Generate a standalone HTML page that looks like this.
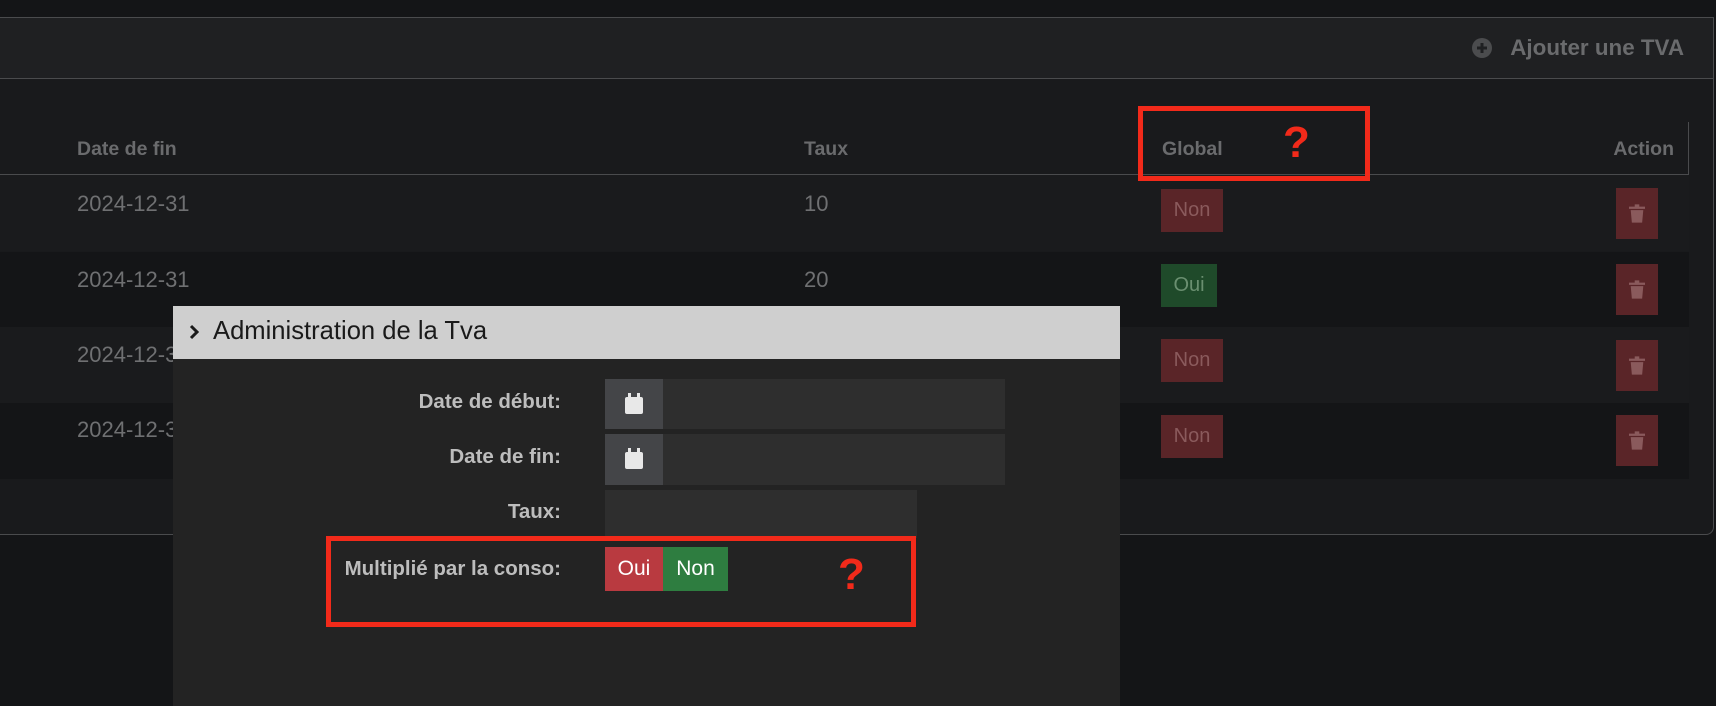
<!DOCTYPE html>
<html><head><meta charset="utf-8"><style>
*{margin:0;padding:0;box-sizing:border-box}
body{width:1716px;height:704px;background:#141517;font-family:"Liberation Sans",sans-serif;position:relative;overflow:hidden}
.a{position:absolute}
.panel{left:-2px;top:17px;width:1716px;height:518px;border:1px solid #4a4b4d;border-radius:0 0 8px 0;background:#191a1c}
.ph{left:0;top:18px;width:1713px;height:61px;background:#1f2022;border-bottom:1px solid #4a4b4d}
.t{color:#6f7072;font-size:22px;line-height:26px}
.th{color:#6a6b6d;font-size:19.5px;font-weight:bold;line-height:22px}
.row{left:0;width:1689px;height:76px}
.badge{width:62px;height:43px;color:#8a5a5c;font-size:20px;display:flex;align-items:center;justify-content:center}
.non{background:#5a2528}
.oui{background:#1f4a2a;color:#6a8f70}
.trash{width:42px;height:51px;background:#5a2528;display:flex;align-items:center;justify-content:center}
.lbl{color:#bdbdbd;font-size:20.5px;font-weight:bold;text-align:right;width:460px;left:101px;line-height:24px}
.red{border:5px solid #f22a1a}
.q{color:#f22a1a;font-weight:bold;font-size:44px}
</style></head><body>
<div class="a panel"></div>
<div class="a ph"></div>
<svg class="a" style="left:1471px;top:37px" width="22" height="22" viewBox="0 0 22 22"><circle cx="11" cy="11" r="10" fill="#4b4c4e"/><path d="M11 6v10M6 11h10" stroke="#1f2022" stroke-width="3"/></svg>
<div class="a" style="right:32px;top:35px;color:#6a6b6d;font-size:22.4px;font-weight:bold">Ajouter une TVA</div>
<div class="a" style="left:0;top:174px;width:1689px;height:1px;background:#4a4b4d"></div>
<div class="a" style="left:1688px;top:122px;width:1px;height:53px;background:#4a4b4d"></div>
<div class="a th" style="left:77px;top:138px">Date de fin</div>
<div class="a th" style="left:804px;top:138px">Taux</div>
<div class="a th" style="left:1162px;top:138px">Global</div>
<div class="a th" style="right:42px;top:138px">Action</div>
<div class="a row" style="top:175px;background:#1a1b1d"></div>
<div class="a row" style="top:252px;background:#141517"></div>
<div class="a row" style="top:327px;background:#1a1b1d"></div>
<div class="a row" style="top:403px;background:#141517"></div>
<div class="a t" style="left:77px;top:191px">2024-12-31</div><div class="a t" style="left:804px;top:191px">10</div>
<div class="a t" style="left:77px;top:267px">2024-12-31</div><div class="a t" style="left:804px;top:267px">20</div>
<div class="a t" style="left:77px;top:342px">2024-12-31</div>
<div class="a t" style="left:77px;top:417px">2024-12-31</div>
<div class="a badge non" style="left:1161px;top:189px">Non</div>
<div class="a badge oui" style="left:1161px;top:264px;width:56px">Oui</div>
<div class="a badge non" style="left:1161px;top:339px">Non</div>
<div class="a badge non" style="left:1161px;top:415px">Non</div>
<div class="a trash" style="left:1616px;top:188px"><svg width="16" height="19" viewBox="0 0 14 16"><path d="M0 2h14v2H0zM5 0h4v2H5zM1.5 5h11l-1 11h-9z" fill="#8a5a5c"/></svg></div>
<div class="a trash" style="left:1616px;top:264px"><svg width="16" height="19" viewBox="0 0 14 16"><path d="M0 2h14v2H0zM5 0h4v2H5zM1.5 5h11l-1 11h-9z" fill="#8a5a5c"/></svg></div>
<div class="a trash" style="left:1616px;top:340px"><svg width="16" height="19" viewBox="0 0 14 16"><path d="M0 2h14v2H0zM5 0h4v2H5zM1.5 5h11l-1 11h-9z" fill="#8a5a5c"/></svg></div>
<div class="a trash" style="left:1616px;top:415px"><svg width="16" height="19" viewBox="0 0 14 16"><path d="M0 2h14v2H0zM5 0h4v2H5zM1.5 5h11l-1 11h-9z" fill="#8a5a5c"/></svg></div>
<div class="a red" style="left:1138px;top:106px;width:232px;height:75px"></div>
<div class="a q" style="left:1283px;top:118px">?</div>
<!-- modal -->
<div class="a" style="left:173px;top:306px;width:947px;height:400px;background:#232323"></div>
<div class="a" style="left:173px;top:306px;width:947px;height:53px;background:#cfcfcf"></div>
<svg class="a" style="left:189px;top:324px" width="10" height="16" viewBox="0 0 10 16"><path d="M2 2l6 6-6 6" stroke="#1a1a1a" stroke-width="3" fill="none"/></svg>
<div class="a" style="left:213px;top:317px;font-size:25.6px;color:#1a1a1a">Administration de la Tva</div>
<div class="a lbl" style="top:390px">Date de début:</div>
<div class="a lbl" style="top:445px">Date de fin:</div>
<div class="a lbl" style="top:500px">Taux:</div>
<div class="a lbl" style="top:557px">Multiplié par la conso:</div>
<div class="a" style="left:605px;top:379px;width:400px;height:50px;background:#2e2e2e"></div>
<div class="a" style="left:605px;top:379px;width:58px;height:50px;background:#444548"></div>
<div class="a" style="left:605px;top:434px;width:400px;height:51px;background:#2e2e2e"></div>
<div class="a" style="left:605px;top:434px;width:58px;height:51px;background:#444548"></div>
<svg class="a" style="left:624px;top:393px" width="20" height="22" viewBox="0 0 20 22"><rect x="1" y="4" width="18" height="17" rx="2" fill="#e8e8e8"/><rect x="4" y="0" width="3" height="6" fill="#e8e8e8"/><rect x="13" y="0" width="3" height="6" fill="#e8e8e8"/></svg>
<svg class="a" style="left:624px;top:448px" width="20" height="22" viewBox="0 0 20 22"><rect x="1" y="4" width="18" height="17" rx="2" fill="#e8e8e8"/><rect x="4" y="0" width="3" height="6" fill="#e8e8e8"/><rect x="13" y="0" width="3" height="6" fill="#e8e8e8"/></svg>
<div class="a" style="left:605px;top:490px;width:312px;height:48px;background:#2e2e2e"></div>
<div class="a" style="left:605px;top:547px;width:58px;height:44px;background:#b93a40;color:#fff;font-size:21px;display:flex;align-items:center;justify-content:center">Oui</div>
<div class="a" style="left:663px;top:547px;width:65px;height:44px;background:#2e7d40;color:#fff;font-size:21px;display:flex;align-items:center;justify-content:center">Non</div>
<div class="a red" style="left:326px;top:536px;width:590px;height:91px"></div>
<div class="a q" style="left:838px;top:550px">?</div>
</body></html>
